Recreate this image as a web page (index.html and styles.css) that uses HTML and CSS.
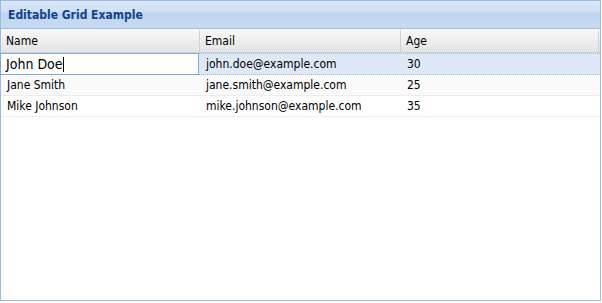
FILE: index.html
```html
<!DOCTYPE html>
<html>
<head>
<meta charset="utf-8">
<link rel="stylesheet" href="styles.css">
</head>
<body>
<div class="panel">
  <div class="panel-title">Editable Grid Example</div>
  <div class="grid">
    <div class="grid-header">
      <div class="hcell">Name</div>
      <div class="hcell">Email</div>
      <div class="hcell last">Age</div>
    </div>
    <div class="row selected">
      <div class="cell editor-cell"><div class="editor">John Doe<span class="caret"></span></div></div>
      <div class="cell">john.doe@example.com</div>
      <div class="cell">30</div>
    </div>
    <div class="row alt">
      <div class="cell">Jane Smith</div>
      <div class="cell">jane.smith@example.com</div>
      <div class="cell">25</div>
    </div>
    <div class="row">
      <div class="cell">Mike Johnson</div>
      <div class="cell">mike.johnson@example.com</div>
      <div class="cell">35</div>
    </div>
  </div>
</div>
</body>
</html>
```

FILE: styles.css
```css
* { box-sizing: border-box; }
html, body { margin: 0; padding: 0; background: #fff; }
body { font-family: Tahoma, "DejaVu Sans Condensed", "DejaVu Sans", sans-serif; }

.panel {
  width: 601px;
  height: 301px;
  border: 1px solid #99bbe8;
  display: flex;
  flex-direction: column;
}

.panel-title {
  height: 28px;
  padding: 1px 0 0 7px;
  display: flex;
  align-items: center;
  font-size: 12px;
  font-weight: bold;
  color: #15428b;
  background: linear-gradient(#dbe7f6 0%, #d0e0f4 40%, #bfd5f0 45%, #c6daf2 100%);
  border-bottom: 1px solid #99bbe8;
}

.grid { flex: 1; background: #fff; }

.grid-header {
  display: grid;
  grid-template-columns: 199px 201px 1fr;
  height: 24px;
  padding-top: 1px;
  background: linear-gradient(#f9f9f9, #e4e4e4);
  border-bottom: 1px solid #d0d0d0;
}

.hcell {
  display: flex;
  align-items: center;
  padding-left: 5px;
  font-size: 12px;
  color: #000;
  border-right: 1px solid #d0d0d0;
}
.hcell.last { border-right: 1px solid #d0d0d0; margin-right: 1px; }

.row {
  display: grid;
  grid-template-columns: 199px 201px 1fr;
  height: 21px;
  border-bottom: 1px solid #ededed;
  background: #fff;
}
.row.alt { background: #fafafa; }
.row.selected {
  height: 22px;
  background: #dfe8f6;
  border-top: 1px dotted #a3bae9;
  border-bottom: 1px dotted #a3bae9;
}

.cell {
  display: flex;
  align-items: center;
  padding-left: 6px;
  font-size: 12px;
  color: #000;
  white-space: nowrap;
}

.editor-cell { padding: 0; position: relative; }
.editor {
  position: absolute;
  left: -1px;
  top: -1px;
  width: 199px;
  height: 22px;
  background: #fff;
  border: 1px solid #7eadd9;
  padding-left: 5px;
  display: flex;
  align-items: center;
  font-size: 14px;
}
.caret {
  display: inline-block;
  width: 1px;
  height: 15px;
  background: #000;
}
```
